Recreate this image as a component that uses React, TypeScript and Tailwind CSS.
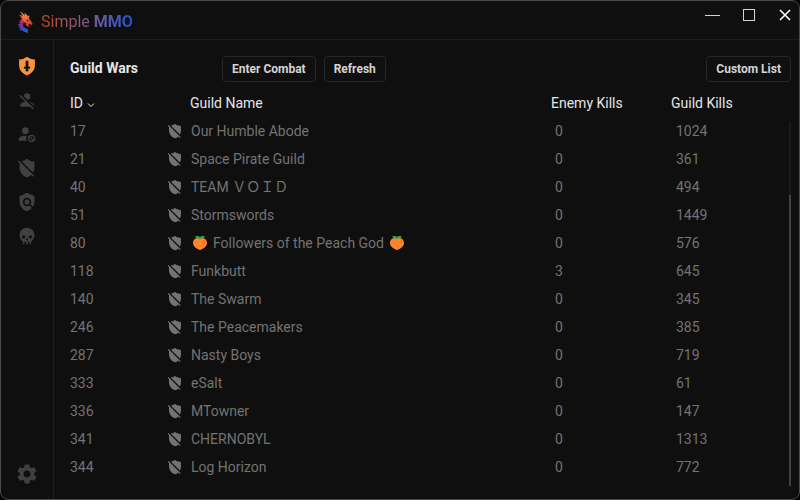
import React, { useState } from "react";
import { MdPolicy, MdSettings } from "react-icons/md";

interface IconProps {
  className?: string;
}

interface Guild {
  id: number;
  name: string;
  enemyKills: number;
  guildKills: number;
  peach?: boolean;
}

const GUILDS: Guild[] = [
  { id: 17, name: "Our Humble Abode", enemyKills: 0, guildKills: 1024 },
  { id: 21, name: "Space Pirate Guild", enemyKills: 0, guildKills: 361 },
  { id: 40, name: "TEAM \uFF36\uFF2F\uFF29\uFF24", enemyKills: 0, guildKills: 494 },
  { id: 51, name: "Stormswords", enemyKills: 0, guildKills: 1449 },
  { id: 80, name: "Followers of the Peach God", enemyKills: 0, guildKills: 576, peach: true },
  { id: 118, name: "Funkbutt", enemyKills: 3, guildKills: 645 },
  { id: 140, name: "The Swarm", enemyKills: 0, guildKills: 345 },
  { id: 246, name: "The Peacemakers", enemyKills: 0, guildKills: 385 },
  { id: 287, name: "Nasty Boys", enemyKills: 0, guildKills: 719 },
  { id: 333, name: "eSalt", enemyKills: 0, guildKills: 61 },
  { id: 336, name: "MTowner", enemyKills: 0, guildKills: 147 },
  { id: 341, name: "CHERNOBYL", enemyKills: 0, guildKills: 1313 },
  { id: 344, name: "Log Horizon", enemyKills: 0, guildKills: 772 },
];

const ShieldSwordIcon = ({ className }: IconProps) => (
  <svg viewBox="0 0 24 24" className={className} fill="currentColor" aria-hidden="true">
    <path
      fillRule="evenodd"
      d="M12 1C9.500 3 6.500 4 2.500 4.300V11C2.500 16.800 6.600 21.400 12 23C17.400 21.400 21.500 16.800 21.500 11V4.300C17.500 4 14.500 3 12 1ZM12 5L13.700 6.500V13H15.700V15.200H13.200V16.500L14.200 17.500L12 19L9.800 17.500L10.800 16.500V15.200H8.300V13H10.300V6.500Z"
    />
  </svg>
);

const UserOffIcon = ({ className }: IconProps) => (
  <svg viewBox="0 0 24 24" className={className} fill="currentColor" aria-hidden="true">
    <path d="M12,4A4,4 0 0,1 16,8C16,9.95 14.6,11.58 12.75,11.93L8.07,7.25C8.42,5.4 10.05,4 12,4M12.28,14L18.28,20L20,21.72L18.73,23L15.73,20H4V18C4,16.16 6.5,14.61 9.87,14.14L2.78,7.05L4.05,5.78L12.28,14M20,18V19.18L15.14,14.32C18,14.93 20,16.35 20,18Z" />
  </svg>
);

const UserCancelIcon = ({ className }: IconProps) => (
  <svg viewBox="0 0 24 24" className={className} fill="currentColor" aria-hidden="true">
    <path d="M10 4A4 4 0 0 0 6 8A4 4 0 0 0 10 12A4 4 0 0 0 14 8A4 4 0 0 0 10 4M17.5 13C15 13 13 15 13 17.5C13 20 15 22 17.5 22C20 22 22 20 22 17.5C22 15 20 13 17.5 13M10 14C5.58 14 2 15.79 2 18V20H11.5A6.5 6.5 0 0 1 11 17.5A6.5 6.5 0 0 1 11.95 14.14C11.32 14.06 10.68 14 10 14M17.5 14.5C19.16 14.5 20.5 15.84 20.5 17.5C20.5 18.06 20.35 18.58 20.08 19L16 14.92C16.42 14.65 16.94 14.5 17.5 14.5M14.92 16L19 20.08C18.58 20.35 18.06 20.5 17.5 20.5C15.84 20.5 14.5 19.16 14.5 17.5C14.5 16.94 14.65 16.42 14.92 16Z" />
  </svg>
);

const ShieldOffIcon = ({ className }: IconProps) => (
  <svg viewBox="0 0 24 24" className={className} fill="currentColor" aria-hidden="true">
    <path d="M1,4.27L2.28,3L20.5,21.22L19.23,22.5L17,20.25C15.57,21.6 13.87,22.54 12,23C6.84,21.74 3,16.55 3,11V6.27L1,4.27M12,1C14,3 17,4.2 21,4.5V11C21,13.28 20.35,15.5 19.23,17.41L5.65,3.82C8,3.4 10.5,2.4 12,1Z" />
  </svg>
);

const SkullIcon = ({ className }: IconProps) => (
  <svg viewBox="0 0 24 24" className={className} fill="currentColor" aria-hidden="true">
    <path d="M12,2A9,9 0 0,0 3,11C3,14.03 4.53,16.82 7,18.47V22H9V19H11V22H13V19H15V22H17V18.46C19.47,16.81 21,14 21,11A9,9 0 0,0 12,2M8,11A2,2 0 0,1 10,13A2,2 0 0,1 8,15A2,2 0 0,1 6,13A2,2 0 0,1 8,11M16,11A2,2 0 0,1 18,13A2,2 0 0,1 16,15A2,2 0 0,1 14,13A2,2 0 0,1 16,11M12,14L13.5,17H10.5L12,14Z" />
  </svg>
);

const PeachIcon = () => (
  <svg viewBox="0 0 16 16" className="mx-px size-4 shrink-0" role="img" aria-label="Peach">
    <path d="M8 3.500C4 2 1 4.500 1 8C1 11.500 4 13.500 8 15C12 13.500 15 11.500 15 8C15 4.500 12 2 8 3.500Z" fill="#ff822d" />
    <path d="M11 4C12.800 4.500 13.500 6.500 12.500 8.500C12.500 6.500 12 5.300 11 4Z" fill="#f2601d" />
    <path d="M3 1.500C5 .5 7 1 8 2.200C9 1 11 .5 13 1.500C12 3.300 10 4 8 3.200C6 4 4 3.300 3 1.500Z" fill="#1fae5b" />
  </svg>
);

const DragonLogo = () => (
  <svg viewBox="0 0 16 22" className="h-[22px] w-4" aria-hidden="true">
    <defs>
      <linearGradient id="mane" x1="0.500" y1="0" x2="0.400" y2="1">
        <stop offset="0" stopColor="#e8762c" />
        <stop offset="0.300" stopColor="#c2324a" />
        <stop offset="0.550" stopColor="#7a2aa0" />
        <stop offset="0.800" stopColor="#2a4fd0" />
        <stop offset="1" stopColor="#1590e0" />
      </linearGradient>
      <linearGradient id="face" x1="0" y1="0" x2="0.500" y2="1">
        <stop offset="0" stopColor="#f7a83e" />
        <stop offset="0.600" stopColor="#ee6a33" />
        <stop offset="1" stopColor="#d8323a" />
      </linearGradient>
    </defs>
    <path
      fill="url(#mane)"
      d="M2 4L5 7L4 9L2 9.500L4 11L1.500 11L3.500 13L0 13.500L3 15L1 16L4 17.500L2 18.500C5 19.500 8 21 11.500 22C10 20.500 11.500 20 11 18.500C10 17 6.500 17 6 14.500C5.800 12.500 7 11.500 8 10L7 5Z"
    />
    <path
      fill="url(#face)"
      d="M3 0L8 4.500L7.500 1.500L11 5L12.500 4.500L12 7.500L14 10L15.500 12.500L15 14.500L13 13L11 13.500L13 15.500L10.500 15.500L8 13L7 10L5 9L6.500 8L3.500 6L6.500 6Z"
    />
    <path d="M9 8.500L12 9.500L10.500 10.500ZM8 11L9.500 12.500L8.500 14Z" fill="#3a1220" />
  </svg>
);

const NAV_ITEMS = [
  { label: "Guild wars", Icon: ShieldSwordIcon },
  { label: "Players offline", Icon: UserOffIcon },
  { label: "Blocked players", Icon: UserCancelIcon },
  { label: "Guilds off", Icon: ShieldOffIcon },
  { label: "Guild search", Icon: MdPolicy },
  { label: "Kills", Icon: SkullIcon },
];

const BUTTON =
  "h-[26px] rounded border border-[#262626] px-[9px] text-xs font-bold text-[#d4d4d4] hover:bg-neutral-800";

const TitleBar = () => (
  <header className="flex h-[39px] items-center justify-between border-b border-[#1c1c1c] pr-1 pl-4">
    <div className="flex items-center gap-2 pt-[3px]">
      <DragonLogo />
      <h1 className="bg-linear-to-r from-[#c2410c] to-[#1d4ed8] bg-clip-text text-base text-transparent">
        Simple <span className="font-bold">MMO</span>
      </h1>
    </div>
    <div className="flex items-center gap-4 self-start pt-[3px] text-[#d4d4d4]">
      <button type="button" aria-label="Minimize" className="flex size-5 items-center justify-center">
        <svg viewBox="0 0 16 16" className="size-4" stroke="currentColor">
          <path d="M0 9.500H15" />
        </svg>
      </button>
      <button type="button" aria-label="Maximize" className="flex size-5 items-center justify-center">
        <svg viewBox="0 0 16 16" className="size-4" fill="none" stroke="currentColor">
          <rect x="2.500" y="3.500" width="11" height="11" />
        </svg>
      </button>
      <button type="button" aria-label="Close" className="flex size-5 items-center justify-center text-white">
        <svg viewBox="0 0 16 16" className="size-4" stroke="currentColor" strokeWidth="1.600">
          <path d="M3 4L13 14M13 4L3 14" />
        </svg>
      </button>
    </div>
  </header>
);

const Sidebar = () => {
  const [active, setActive] = useState(0);

  return (
    <nav className="flex w-[53px] shrink-0 flex-col items-center border-r border-[#1c1c1c] pt-4 pb-[13px] text-[#404040]">
      <div className="flex flex-col gap-[14px]">
        {NAV_ITEMS.map(({ label, Icon }, index) => (
          <button
            key={label}
            type="button"
            aria-label={label}
            onClick={() => setActive(index)}
            className={index === active ? "text-[#fb923c]" : "hover:text-neutral-400"}
          >
            <Icon className="size-5" />
          </button>
        ))}
      </div>
      <button type="button" aria-label="Settings" className="mt-auto hover:text-neutral-400">
        <MdSettings className="size-6" />
      </button>
    </nav>
  );
};

const GuildRow = ({ guild }: { guild: Guild }) => (
  <tr className="h-7">
    <td>{guild.id}</td>
    <td>
      <ShieldOffIcon className="size-4 text-[#737373]" />
    </td>
    <td>
      <div className="flex h-5 items-center gap-1 pl-px">
        {guild.peach && <PeachIcon />}
        <span>{guild.name}</span>
        {guild.peach && <PeachIcon />}
      </div>
    </td>
    <td className="pl-1">{guild.enemyKills}</td>
    <td className="pl-[5px]">{guild.guildKills}</td>
  </tr>
);

const GuildTable = () => (
  <div className="flex min-h-0 grow">
    <table className="grow table-fixed self-start text-left text-sm text-[#737373]">
      <colgroup>
        <col className="w-[97px]" />
        <col className="w-[23px]" />
        <col />
        <col className="w-[120px]" />
        <col className="w-[118px]" />
      </colgroup>
      <thead className="text-[#e5e5e5]">
        <tr className="h-7">
          <th className="font-normal">
            <button type="button" className="flex items-center gap-1">
              ID
              <svg viewBox="0 0 8 8" className="mt-[3px] size-2" fill="none" stroke="currentColor" aria-label="Sorted ascending">
                <path d="M1 2.500L4 5.500L7 2.500" />
              </svg>
            </button>
          </th>
          <th />
          <th className="font-normal">Guild Name</th>
          <th className="font-normal">Enemy Kills</th>
          <th className="font-normal">Guild Kills</th>
        </tr>
      </thead>
      <tbody>
        {GUILDS.map((guild) => (
          <GuildRow key={guild.id} guild={guild} />
        ))}
      </tbody>
    </table>
    <div className="mt-[33px] mb-[13px] flex w-0.5 flex-col justify-end bg-[#1a1a1a]">
      <div className="h-4/5 bg-[#404040]" />
    </div>
  </div>
);

export default function App() {
  return (
    <div className="h-screen bg-black">
      <div className="flex h-full flex-col overflow-hidden rounded-lg border border-[#4a4a4a] bg-[#0f0f0f] font-[Roboto,'Noto_Sans_CJK_JP',sans-serif]">
        <TitleBar />
        <div className="flex min-h-0 grow">
          <Sidebar />
          <main className="flex min-w-0 grow flex-col pt-4 pr-2 pl-4">
            <div className="flex items-center">
              <h2 className="w-[152px] pb-0.5 text-sm font-bold text-[#e5e5e5]">Guild Wars</h2>
              <div className="flex gap-2">
                <button type="button" className={BUTTON}>
                  Enter Combat
                </button>
                <button type="button" className={BUTTON}>
                  Refresh
                </button>
              </div>
              <button type="button" className={`${BUTTON} ml-auto`}>
                Custom List
              </button>
            </div>
            <div className="mt-[7px] flex min-h-0 grow">
              <GuildTable />
            </div>
          </main>
        </div>
      </div>
    </div>
  );
}
